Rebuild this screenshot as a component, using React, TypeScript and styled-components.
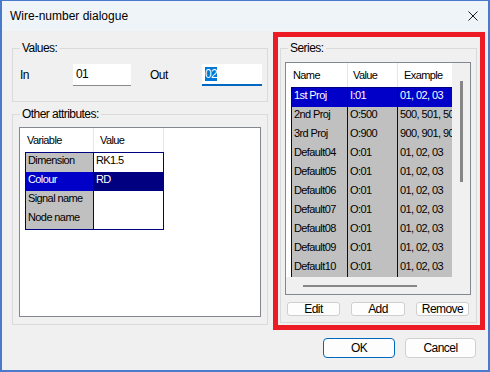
import React from 'react';
import styled, { createGlobalStyle } from 'styled-components';

const Global = createGlobalStyle`
  html, body { margin: 0; padding: 0; background: #f0f0f0; }
  body {
    width: 490px; height: 372px; overflow: hidden;
    font-family: "Liberation Sans", Arial, sans-serif;
    color: #000;
  }
`;

const Window = styled.div`
  position: relative;
  width: 490px;
  height: 372px;
  box-sizing: border-box;
  border: 2px solid #4a7acb;
  border-top-width: 1px;
  background: #f0f0f0;
  display: flex;
  flex-direction: column;
`;

const TitleBar = styled.div`
  flex: none;
  height: 30px;
  background: #eff4f9;
  display: flex;
  align-items: center;
  justify-content: space-between;
  padding: 0 10px 0 8px;
  font-size: 12px;
`;

const CloseIcon = styled.svg`
  width: 10px;
  height: 10px;
  display: block;
`;

const Body = styled.div`
  flex: 1;
  display: flex;
  flex-direction: column;
  padding: 17px 11px 0 10px;
  letter-spacing: -0.55px;
  font-size: 12px;
`;

const Columns = styled.div`
  display: flex;
  align-items: flex-start;
  gap: 12px;
`;

const LeftColumn = styled.div`
  width: 256px;
  display: flex;
  flex-direction: column;
  gap: 12px;
`;

const GroupBox = styled.div<{ $h: number }>`
  position: relative;
  box-sizing: border-box;
  height: ${(p) => p.$h}px;
  border: 1px solid #dadada;
`;

const Legend = styled.span`
  position: absolute;
  top: -8px;
  left: 7px;
  padding: 0 2px;
  background: #f0f0f0;
  font-size: 12px;
  line-height: 15px;
  white-space: nowrap;
`;

const ValuesBox = styled(GroupBox)`
  padding: 15px 0 0 7px;
`;

const FieldRow = styled.div`
  display: flex;
  align-items: flex-start;
`;

const FieldLabel = styled.div<{ $w: number; $ml?: number }>`
  width: ${(p) => p.$w}px;
  margin-left: ${(p) => p.$ml ?? 0}px;
  line-height: 22px;
  height: 22px;
`;

const TextField = styled.div<{ $w: number; $focused?: boolean }>`
  width: ${(p) => p.$w}px;
  height: 22px;
  box-sizing: border-box;
  background: #fff;
  padding: 3px 3px 0;
  line-height: 14px;
  border-bottom: ${(p) => (p.$focused ? '2px solid #0067c0' : '1px solid #8a8a8a')};
`;

const Selected = styled.span`
  background: #0078d7;
  color: #fff;
`;

const AttrBox = styled(GroupBox)`
  padding: 12px 6px 7px 6px;
`;

const ListBox = styled.div`
  box-sizing: border-box;
  height: 100%;
  border: 1px solid #828790;
  background: #fff;
  overflow: hidden;
`;

const ListPad = styled.div`
  padding-left: 5px;
  font-size: 11px;
  letter-spacing: -0.6px;
`;

const HeaderRow = styled.div`
  display: flex;
  height: 24px;
  background: #fff;
`;

const HeaderCell = styled.div<{ $w: number; $pl: number }>`
  flex: none;
  box-sizing: border-box;
  width: ${(p) => p.$w}px;
  padding-left: ${(p) => p.$pl}px;
  line-height: 25px;
  border-right: 1px solid #e5e5e5;
  white-space: nowrap;
  overflow: hidden;
`;

const DataTable = styled.div`
  display: inline-flex;
  flex-direction: column;
  border-top: 1px solid #000080;
  border-bottom: 1px solid #000080;
`;

const DataRow = styled.div`
  display: flex;
`;

const DataCell = styled.div<{ $w: number; $bg: string; $fg: string; $first?: boolean }>`
  flex: none;
  box-sizing: border-box;
  width: ${(p) => p.$w}px;
  height: 19px;
  line-height: 15px;
  padding-left: 2px;
  background: ${(p) => p.$bg};
  color: ${(p) => p.$fg};
  border-right: 1px solid #000080;
  border-left: ${(p) => (p.$first ? '1px solid #000080' : 'none')};
  white-space: nowrap;
  overflow: hidden;
`;

const SeriesBox = styled(GroupBox)`
  width: 197px;
  padding: 13px 5px 6px 4px;
  display: flex;
  flex-direction: column;
`;

const SeriesList = styled.div`
  box-sizing: border-box;
  height: 233px;
  border: 1px solid #828790;
  display: grid;
  grid-template-columns: 166px 18px;
  grid-template-rows: 214px 17px;
`;

const Viewport = styled.div`
  background: #fff;
  overflow: hidden;
`;

const VTrack = styled.div`
  background: #f0f0f0;
  padding: 18px 0 0 8px;
`;

const VThumb = styled.div`
  width: 3px;
  height: 101px;
  background: #868686;
`;

const HTrack = styled.div`
  grid-column: 1 / 3;
  background: #f0f0f0;
  padding: 8px 0 0 17px;
`;

const HThumb = styled.div`
  width: 114px;
  height: 2px;
  background: #868686;
`;

const SmallButtons = styled.div`
  display: flex;
  justify-content: space-between;
  margin-top: 7px;
  padding: 0 2px 0 2px;
`;

const SmallButton = styled.div<{ $w: number }>`
  width: ${(p) => p.$w}px;
  height: 14px;
  box-sizing: border-box;
  border: 1px solid #cfcfcf;
  border-radius: 3px;
  background: #fdfdfd;
  text-align: center;
  line-height: 12px;
  font-size: 12px;
`;

const Footer = styled.div`
  display: flex;
  justify-content: flex-end;
  gap: 10px;
  margin-top: 13px;
  padding-right: 1px;
`;

const DialogButton = styled.div<{ $default?: boolean; $w: number }>`
  width: ${(p) => p.$w}px;
  height: 20px;
  box-sizing: border-box;
  border: 1px solid ${(p) => (p.$default ? '#0067c0' : '#d0d0d0')};
  border-radius: 4px;
  background: #fdfdfd;
  text-align: center;
  line-height: 18px;
  font-size: 12px;
`;

const Annotation = styled.div`
  position: absolute;
  left: 271px;
  top: 31px;
  width: 212px;
  height: 298px;
  box-sizing: border-box;
  border: 5px solid #ed1c24;
  pointer-events: none;
`;

const attrRows: [string, string][] = [
  ['Dimension', 'RK1.5'],
  ['Colour', 'RD'],
  ['Signal name', ''],
  ['Node name', ''],
];

const seriesRows: [string, string, string][] = [
  ['1st Proj', 'I:01', '01, 02, 03'],
  ['2nd Proj', 'O:500', '500, 501, 502'],
  ['3rd Proj', 'O:900', '900, 901, 902'],
  ['Default04', 'O:01', '01, 02, 03'],
  ['Default05', 'O:01', '01, 02, 03'],
  ['Default06', 'O:01', '01, 02, 03'],
  ['Default07', 'O:01', '01, 02, 03'],
  ['Default08', 'O:01', '01, 02, 03'],
  ['Default09', 'O:01', '01, 02, 03'],
  ['Default10', 'O:01', '01, 02, 03'],
];

const GRAY = '#c0c0c0';
const BLUE = '#0000c8';
const NAVY = '#000080';

export default function App() {
  return (
    <>
      <Global />
      <Window>
        <TitleBar>
          <span>Wire-number dialogue</span>
          <CloseIcon viewBox="0 0 10 10">
            <path d="M0.5 0.5 L9.5 9.5 M9.5 0.5 L0.5 9.5" stroke="#1a1a1a" strokeWidth="1" fill="none" />
          </CloseIcon>
        </TitleBar>
        <Body>
          <Columns>
            <LeftColumn>
              <ValuesBox $h={54}>
                <Legend>Values:</Legend>
                <FieldRow>
                  <FieldLabel $w={53}>In</FieldLabel>
                  <TextField $w={58}>01</TextField>
                  <FieldLabel $w={52} $ml={19}>Out</FieldLabel>
                  <TextField $w={60} $focused>
                    <Selected>02</Selected>
                  </TextField>
                </FieldRow>
              </ValuesBox>
              <AttrBox $h={211}>
                <Legend>Other attributes:</Legend>
                <ListBox>
                  <ListPad>
                    <HeaderRow>
                      <HeaderCell $w={69} $pl={2}>Variable</HeaderCell>
                      <HeaderCell $w={70} $pl={6}>Value</HeaderCell>
                    </HeaderRow>
                    <DataTable>
                      {attrRows.map(([name, value], i) => {
                        const sel = i === 1;
                        return (
                          <DataRow key={name}>
                            <DataCell $w={69} $first $bg={sel ? BLUE : GRAY} $fg={sel ? '#fff' : '#000'}>
                              {name}
                            </DataCell>
                            <DataCell $w={70} $bg={sel ? NAVY : '#fff'} $fg={sel ? '#fff' : '#000'}>
                              {value}
                            </DataCell>
                          </DataRow>
                        );
                      })}
                    </DataTable>
                  </ListPad>
                </ListBox>
              </AttrBox>
            </LeftColumn>
            <SeriesBox $h={275}>
              <Legend>Series:</Legend>
              <SeriesList>
                <Viewport>
                  <ListPad>
                    <HeaderRow>
                      <HeaderCell $w={57} $pl={2}>Name</HeaderCell>
                      <HeaderCell $w={50} $pl={5}>Value</HeaderCell>
                      <HeaderCell $w={70} $pl={6}>Example</HeaderCell>
                    </HeaderRow>
                    <DataTable>
                      {seriesRows.map(([n, v, e], i) => {
                        const sel = i === 0;
                        const bg = sel ? BLUE : GRAY;
                        const fg = sel ? '#fff' : '#000';
                        return (
                          <DataRow key={n}>
                            <DataCell $w={57} $first $bg={bg} $fg={fg}>{n}</DataCell>
                            <DataCell $w={50} $bg={bg} $fg={fg}>{v}</DataCell>
                            <DataCell $w={70} $bg={bg} $fg={fg}>{e}</DataCell>
                          </DataRow>
                        );
                      })}
                    </DataTable>
                  </ListPad>
                </Viewport>
                <VTrack>
                  <VThumb />
                </VTrack>
                <HTrack>
                  <HThumb />
                </HTrack>
              </SeriesList>
              <SmallButtons>
                <SmallButton $w={53}>Edit</SmallButton>
                <SmallButton $w={54}>Add</SmallButton>
                <SmallButton $w={53}>Remove</SmallButton>
              </SmallButtons>
            </SeriesBox>
          </Columns>
          <Footer>
            <DialogButton $default $w={72}>OK</DialogButton>
            <DialogButton $w={71}>Cancel</DialogButton>
          </Footer>
        </Body>
        <Annotation />
      </Window>
    </>
  );
}
